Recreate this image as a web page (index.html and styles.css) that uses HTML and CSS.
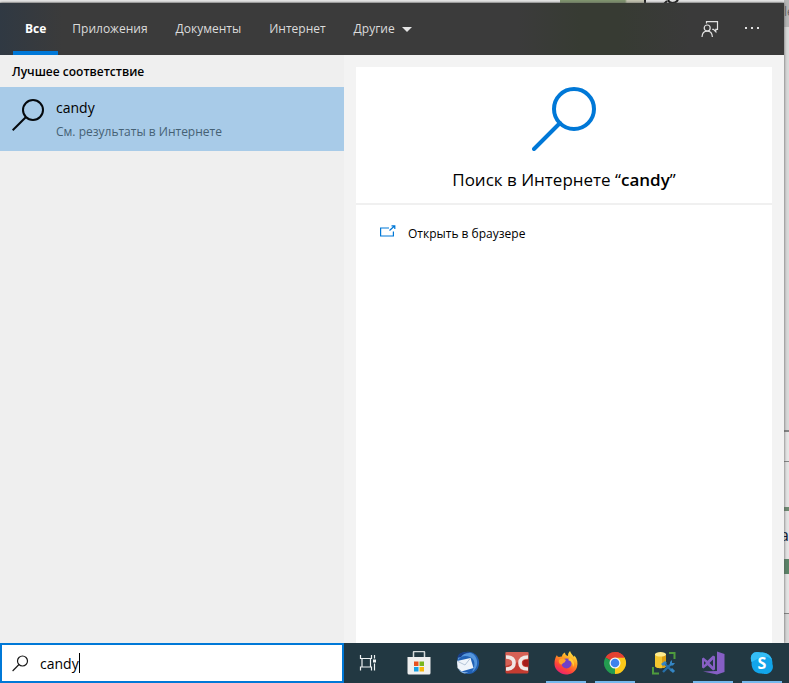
FILE: index.html
```html
<!DOCTYPE html>
<html lang="ru">
<head>
<meta charset="utf-8">
<meta name="viewport" content="width=device-width, initial-scale=1">
<title>Поиск</title>
<link rel="stylesheet" href="styles.css">
</head>
<body>
<div class="desktop">
  <div class="backdrop" aria-hidden="true">
    <span class="patch patch-photo"></span>
    <span class="patch patch-mark"></span>
    <svg class="patch patch-curl" viewBox="0 0 18 4"><path d="M1 4 4 1M5 0c2 4 7 4 10 0" fill="none" stroke="#181818" stroke-width="2"/></svg>
    <span class="patch patch-bar"></span>
    <span class="patch patch-letter-top">le</span>
    <span class="patch patch-panel"></span>
    <span class="patch patch-row"></span>
    <span class="patch patch-green-thin"></span>
    <span class="patch patch-letter">а</span>
    <span class="patch patch-green"></span>
    <span class="patch patch-foot"></span>
  </div>

  <main class="search-window">
    <header class="topbar">
      <nav class="tabs">
        <button class="tab tab-active" type="button">Все</button>
        <button class="tab" type="button">Приложения</button>
        <button class="tab" type="button">Документы</button>
        <button class="tab" type="button">Интернет</button>
        <button class="tab" type="button">Другие<svg class="chevron" viewBox="0 0 10 5"><path d="M0 0h10L5 5z" fill="#e6e6e6"/></svg></button>
      </nav>
      <div class="tools">
        <button class="tool" type="button" aria-label="Отзыв">
          <svg width="18" height="18" viewBox="0 0 18 18" fill="none" stroke="#e2e2e2" stroke-width="1.2"><path d="M5.500 3.600V1.600h11v7.800h-1.700v2.300l-2.300-2.300h-1.300"/><circle cx="6.200" cy="8" r="3"/><path d="M1 17c.2-3.600 2.300-5.900 5.200-5.900s5 2.300 5.200 5.900"/></svg>
        </button>
        <button class="tool" type="button" aria-label="Параметры">
          <svg width="16" height="16" viewBox="0 0 16 16" fill="#e2e2e2"><path d="M1 6h2v2H1zM7 6h2v2H7zM13 6h2v2h-2z"/></svg>
        </button>
      </div>
    </header>

    <div class="content">
      <section class="results">
        <h2 class="group-title">Лучшее соответствие</h2>
        <button class="result" type="button">
          <svg class="result-icon" viewBox="0 0 32 34" fill="none" stroke="#05090d" stroke-width="2"><circle cx="21" cy="12" r="10"/><path d="M14 19 .7 32.300"/></svg>
          <span class="result-text">
            <span class="result-name">candy</span>
            <span class="result-note">См. результаты в Интернете</span>
          </span>
        </button>
      </section>

      <section class="preview">
        <div class="card">
          <div class="hero">
            <svg class="hero-icon" viewBox="0 0 64 64" fill="none" stroke="#0078d7" stroke-width="4"><circle cx="42" cy="22" r="20"/><path d="M28 36 2 62" stroke-linecap="round"/></svg>
            <h1 class="hero-title">Поиск в Интернете “<b>candy</b>”</h1>
          </div>
          <a class="action" href="#">
            <svg class="action-icon" viewBox="0 0 16 14" fill="none" stroke="#0078d7" stroke-width="1.200"><path d="M9 3H.6v8h12.800V6.500M9.500 5.500l5-4.500M11.500.8h3.300V4"/></svg>
            Открыть в браузере
          </a>
        </div>
      </section>
    </div>
  </main>

  <footer class="taskbar">
    <label class="searchbox">
      <svg class="search-icon" viewBox="0 0 17 17" fill="none" stroke="#1a1a1a" stroke-width="1.200"><circle cx="10.500" cy="6" r="5"/><path d="M7 9.500.6 16"/></svg>
      <input class="search-input" type="text" value="candy" size="4" aria-label="Поиск">
      <span class="caret"></span>
    </label>
    <nav class="apps">
      <button class="app" type="button" aria-label="Представление задач">
        <svg viewBox="0 0 24 24" fill="none" stroke="#eef2f3" stroke-width="1.200"><path d="M2.500 4v3.500h11V4M2.500 19.500V16h11v3.500M4 7.500V16M12.500 7.500V16M16.500 4v3.500M16.500 12.500v7"/><path d="M15 8.500h3v3h-3z" fill="#eef2f3" stroke="none"/></svg>
      </button>
      <button class="app" type="button" aria-label="Microsoft Store">
        <svg viewBox="0 0 24 24"><path d="M6.500 7V1.500q0-1 1-1h9q1 0 1 1V7" fill="none" stroke="#d4d9da" stroke-width="1.500"/><path d="M.5 6h23v16q0 1.500-1.500 1.500H2Q.5 23.500.5 22z" fill="#efefef"/><path d="M7 10.500h4.500V15H7z" fill="#e8501f"/><path d="M12.500 10.500H17V15h-4.500z" fill="#79b51c"/><path d="M7 16h4.500v4.500H7z" fill="#16a0e4"/><path d="M12.500 16H17v4.500h-4.500z" fill="#f7b60b"/></svg>
      </button>
      <button class="app" type="button" aria-label="Thunderbird">
        <svg viewBox="0 0 24 24"><path d="M3 4C8-.500 17-.5 21 5c4 6 2 14-4 17-4 2-9 1-12-2-4-4-5-11-2-16z" fill="#2161b5"/><path d="M2 6c5-6 13-6 17-1 4 6 2 13-3 16 4-7 3-13-2-15C9 4 5 5 2 9z" fill="#5596dd"/><path d="M3 3c3-2 8-3 12-1-5-.5-8 1-10 4L1 7z" fill="#183e87"/><path d="M1 10 14.500 7l3 10-12 3.500L1.500 17z" fill="#eff4fa"/><path d="m1 10 8 4 5.500-7" fill="none" stroke="#b5c5d8"/><path d="M2 17c2 3 6 5 10 4-3 3-8 1-10-4z" fill="#8bb7e8"/></svg>
      </button>
      <button class="app" type="button" aria-label="DC">
        <svg viewBox="0 0 24 24"><rect x=".5" y="1" width="23" height="21.500" rx="1.500" fill="#c53c31"/><path d="M.5 1h23v7L.5 15z" fill="#dd7065" opacity=".7"/><path d="M1 6q8 0 8 6t-8 6M23 6q-8 0-8 6t8 6" fill="none" stroke="#f1e8e5" stroke-width="3.600"/><path d="M19 9h4.500v6H19q-2-3 0-6z" fill="#a61c19"/></svg>
      </button>
      <button class="app app-running" type="button" aria-label="Firefox">
        <svg viewBox="0 0 24 24"><defs><linearGradient id="fox" x1=".8" y1="0" x2=".25" y2="1"><stop offset="0" stop-color="#fff04a"/><stop offset=".4" stop-color="#ff9a1f"/><stop offset=".72" stop-color="#ff4439"/><stop offset="1" stop-color="#e51d79"/></linearGradient></defs><path d="M3 4c0 1 1 2 2 2 1-.5 2-.7 3-.5C8 3.500 9 2.500 11 1.500c0 2 1 3 3 3.500 0-2 .5-3.500 2-5 1 3 3 4 4 6l.5-1.500C23.500 8 24 12 23 16c-1.500 5-6 7.500-11 7.500S.5 19 .5 13C.5 9 1 7 3 4z" fill="url(#fox)"/><circle cx="12.500" cy="12.500" r="5" fill="#7141c9"/><path d="M5 9c3-2 5-1 7 0l-1.500 2.500c-1 .5-2 .5-2.500 2-2 0-4-2-3-4.500z" fill="#ffa32b"/><path d="M16 7c4 2 5 6 3 9 0-4-2-6-5-7z" fill="#ffcc35"/></svg>
      </button>
      <button class="app app-running" type="button" aria-label="Chrome">
        <svg viewBox="0 0 24 24"><path d="M12 12 2.470 6.500A11 11 0 0 1 21.530 6.500z" fill="#e34133"/><path d="M12 12 21.530 6.500A11 11 0 0 1 12 23z" fill="#fbc919"/><path d="M12 12v11A11 11 0 0 1 2.470 6.500z" fill="#239c50"/><path d="M12 6.500h9.500q2 4 .8 8L17 13z" fill="#fbc919"/><path d="M2.470 6.500 7.200 14.800 12 17l-3 6-3-2z" fill="#239c50"/><path d="M12 1v5.500h9.500A11 11 0 0 0 12 1z" fill="#e34133"/><circle cx="12" cy="12" r="5.500" fill="#f7f7f7"/><circle cx="12" cy="12" r="4.300" fill="#3f81ec"/></svg>
      </button>
      <button class="app" type="button" aria-label="Управление базами данных">
        <svg viewBox="0 0 24 24"><path d="M17 2h5.500v6M1 16v6.500h6" fill="none" stroke="#4e9b3d" stroke-width="2"/><path d="M3 3v12c0 3 11 3 11 0V3z" fill="#f4c62f"/><path d="M10 3h4v12q-1 2-4 2z" fill="#dca013"/><ellipse cx="8.500" cy="3.300" rx="5.500" ry="2.300" fill="#ffeb8e"/><path d="m11 21 9-9M12 12l8 8" stroke="#266fa9" stroke-width="2.400"/><path d="m9 13 4-3 2 2-4 3zM18 11l2-2v3h3l-2 2.500h-3z" fill="#3486c4"/><path d="m19 18 3 3" stroke="#3486c4" stroke-width="3"/></svg>
      </button>
      <button class="app app-running" type="button" aria-label="Visual Studio">
        <svg viewBox="0 0 24 24"><path d="M16 .5 23.500 3v18L16 23.500l-14-3 14-.5z" fill="#865fc5"/><path fill-rule="evenodd" d="m2.500 6.500 4 3.200L12 4.500l2 1v13l-2 1-5.500-5.200-4 3.200L1 16.500v-9zM3 10v4l2-2zm9-1.500L8.500 12l3.500 3.500z" fill="#865fc5"/></svg>
      </button>
      <button class="app app-running" type="button" aria-label="Skype">
        <svg viewBox="0 0 24 24"><path d="M7 1c2 0 3 .3 4 .6C18 1 23 6 22.400 13c2 5-2 10-7 10-2 0-3-.3-4-.6C5 23 1 18 1.600 11-.5 6 2 1 7 1z" fill="#12a5ea"/><path d="M7 1q2 0 4 .6C17 1 21 5 22 9 16 2 8 8 1.600 11-.5 6 2 1 7 1z" fill="#35bdf5"/><text class="skype-letter" x="12" y="17.500" text-anchor="middle">S</text></svg>
      </button>
    </nav>
  </footer>
</div>
</body>
</html>
```

FILE: styles.css
```css
* {
  box-sizing: border-box;
}

body {
  margin: 0;
  font-family: "Open Sans", "Noto Sans", sans-serif;
  font-size: 12px;
  line-height: 20px;
  color: #000;
}

button {
  margin: 0;
  padding: 0;
  border: 0;
  background: none;
  font: inherit;
  color: inherit;
}

h1,
h2 {
  margin: 0;
}

.desktop {
  position: relative;
  display: flex;
  flex-direction: column;
  min-height: 100vh;
  overflow: hidden;
  background: #dedede;
}

/* Slivers of the windows that lie behind the search pane */
.backdrop {
  position: absolute;
  inset: 0;
  background: linear-gradient(#e9e9e9 0 2px, #c8c8c8 2px 3px, #d9d9d9 3px);
}

.patch {
  position: absolute;
  right: 0;
  width: 5px;
}

.patch-photo {
  top: 0;
  right: 144px;
  width: 85px;
  height: 3px;
  background: linear-gradient(90deg, #81966f 0 65px, #c8c8b4 67px);
}

.patch-mark {
  top: 0;
  right: 143px;
  width: 2px;
  height: 3px;
  background: #222;
}

.patch-curl {
  top: 0;
  right: 108px;
  width: 18px;
  height: 4px;
}

.patch-bar {
  top: 0;
  height: 27px;
  background: #b7b7b7;
}

.patch-letter-top {
  top: 2px;
  overflow: hidden;
  color: #666;
}

.patch-panel {
  top: 430px;
  height: 32px;
  border-top: 2px solid #858585;
  border-bottom: 1px solid #858585;
  background: #e6e6e6;
}

.patch-row {
  top: 462px;
  height: 151px;
  background: #e4e4e4;
}

.patch-green-thin {
  top: 507px;
  height: 4px;
  background: #6e8a72;
}

.patch-letter {
  top: 525px;
  overflow: hidden;
  font-size: 17px;
  direction: rtl;
  color: #101830;
}

.patch-green {
  top: 559px;
  height: 15px;
  background: #5b8468;
}

.patch-foot {
  top: 613px;
  height: 30px;
  border-top: 1px solid #858585;
  background: #d8d8d8;
}

.search-window {
  position: relative;
  flex: 1;
  display: flex;
  flex-direction: column;
  margin: 3px 5px 0 0;
  box-shadow: 0 0 3px #555;
}

.topbar {
  display: flex;
  justify-content: space-between;
  height: 52px;
  padding: 0 11px 0 13px;
  background: linear-gradient(90deg, #303943, #3b3b3b 8%, #3b3b3b 66%, #373b33 74%, #373b33 79%, #3a3a3a 88%);
  color: #dcdcdc;
}

.tabs,
.tools {
  display: flex;
}

.tab {
  display: flex;
  align-items: center;
  padding: 4px 14px 0;
  border-bottom: 4px solid transparent;
}

.tab-active {
  padding: 4px 12px 0;
  border-color: #0078d7;
  font-weight: 700;
  color: #fff;
}

.chevron {
  width: 10px;
  height: 5px;
  margin-left: 7px;
}

.tool {
  display: grid;
  place-items: center;
  width: 42px;
}

.content {
  flex: 1;
  display: grid;
  grid-template-columns: 344px 1fr;
}

.results {
  background: #efefef;
}

.group-title {
  padding: 7px 12px 5px;
  font-size: 12px;
  font-weight: 600;
  line-height: 20px;
}

.result {
  display: flex;
  align-items: center;
  gap: 12px;
  width: 100%;
  height: 64px;
  padding: 2px 12px 0;
  background: #a8cbe8;
  text-align: left;
}

.result-icon {
  width: 32px;
  height: 34px;
  margin-bottom: 10px;
}

.result-text {
  display: flex;
  flex-direction: column;
  gap: 4px;
}

.result-name {
  font-size: 14px;
}

.result-note {
  color: #456174;
}

.preview {
  display: flex;
  padding: 12px 12px 0;
  background: #f3f3f3;
}

.card {
  flex: 1;
  background: #fff;
}

.hero {
  display: flex;
  flex-direction: column;
  align-items: center;
  gap: 17px;
  padding: 20px 0 11px;
  border-bottom: 2px solid #f0f0f0;
}

.hero-icon {
  width: 64px;
  height: 64px;
}

.hero-title {
  font-size: 17px;
  font-weight: 400;
  line-height: 24px;
}

.hero-title b {
  font-weight: 600;
}

.action {
  display: flex;
  align-items: center;
  gap: 12px;
  padding: 19px 24px;
  color: #000;
  text-decoration: none;
}

.action-icon {
  width: 16px;
  height: 14px;
  margin-bottom: 4px;
}

.taskbar {
  position: relative;
  display: grid;
  grid-template-columns: 344px 1fr;
  height: 40px;
  background: #223842;
}

.searchbox {
  display: flex;
  align-items: center;
  padding: 0 10px;
  border: 2px solid #0078d7;
  background: #fff;
}

.search-icon {
  width: 17px;
  height: 17px;
  margin-right: 11px;
}

.search-input {
  field-sizing: content;
  padding: 2px 0 0;
  border: 0;
  outline: 0;
  background: none;
  font: inherit;
  font-size: 14px;
  color: #000;
}

.caret {
  width: 1px;
  height: 20px;
  background: #000;
}

.apps {
  display: flex;
  padding-left: 1px;
}

.app {
  display: grid;
  place-items: center;
  flex: 0 0 49px;
}

.app svg {
  width: 24px;
  height: 24px;
}

.app-running {
  background: linear-gradient(#76b9ed, #76b9ed) center bottom / 40px 2px no-repeat;
}

.skype-letter {
  font-size: 16px;
  font-weight: 700;
  fill: #fff;
}
```
